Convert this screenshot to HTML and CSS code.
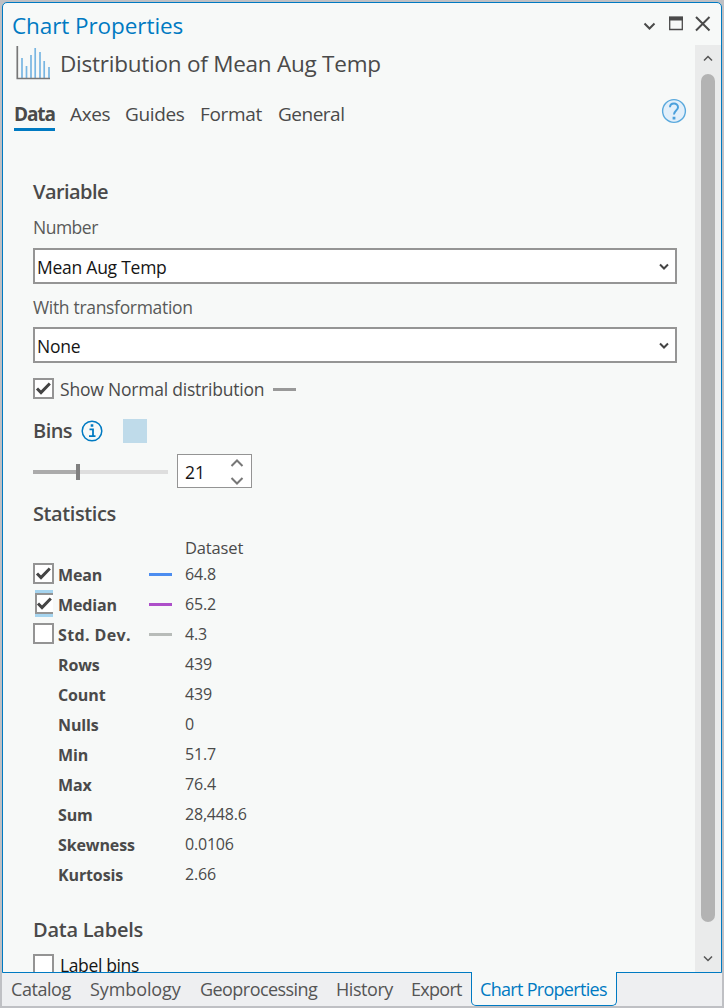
FILE: index.html
```
<!DOCTYPE html>
<html lang="en">
<head>
<meta charset="utf-8">
<title>Chart Properties</title>
<link rel="stylesheet" href="styles.css">
</head>
<body>
<svg class="defs" width="0" height="0"><defs>
<symbol id="check" viewBox="0 0 21 21"><path d="M4 10.500l4 4L16.800 5.500" fill="none" stroke="#444" stroke-width="3"/></symbol>
</defs></svg>
<main class="pane">
  <header class="titlebar">
    <h1 class="pane-title">Chart Properties</h1>
    <svg class="window-controls" width="70" height="20" viewBox="0 0 70 20" fill="none" stroke="#4a4a4a">
      <path d="M2.500 10.500l5 5 5-5" stroke-width="2"/>
      <path d="M27.700 4.500h12.600v12H27.700z" stroke-width="1.300"/><path d="M27 5.500h14" stroke-width="4"/>
      <path d="M54 4l13.500 13.500M67.500 4L54 17.500" stroke-width="2"/>
    </svg>
  </header>
  <div class="body">
    <div class="content">
      <div class="chart-head">
        <svg width="34" height="34" viewBox="0 0 34 34" fill="none">
          <path d="M6 12v20M10.500 20v12M15 9v23M19.200 2v30M24 6v26M28.200 15v17M33 21v11" stroke="#78b6e2" stroke-width="1.700"/>
          <path d="M1.300 0v32.500h33" stroke="#777" stroke-width="1.700"/>
        </svg>
        <h2 class="chart-title">Distribution of Mean Aug Temp</h2>
      </div>
      <div class="nav-row">
        <nav class="tabs"><a class="tab tab-on">Data</a><a class="tab t-axes">Axes</a><a class="tab t-guides">Guides</a><a class="tab t-format">Format</a><a class="tab t-general">General</a></nav>
        <svg class="help" width="26" height="26" viewBox="0 0 26 26" fill="none"><circle cx="13" cy="13" r="11.400" fill="#e2effa" stroke="#5aa9dd" stroke-width="1.400"/><path d="M9 9.300C9 4.300 17 4.300 17 9.200c0 3.300-4 3.300-4 7.300" stroke="#4ba0dc" stroke-width="2"/><path d="M11.600 18.800h2.800v2.700h-2.800z" fill="#4ba0dc"/></svg>
      </div>
      <form class="form">
        <h3 class="section s-variable">Variable</h3>
        <label class="label l-number">Number</label>
        <div class="select"><span class="v-mean">Mean Aug Temp</span><svg width="10" height="8" viewBox="0 0 10 8"><path d="M1 1.500l4 4 4-4" fill="none" stroke="#444" stroke-width="2"/></svg></div>
        <label class="label l-trans">With transformation</label>
        <div class="select"><span>None</span><svg width="10" height="8" viewBox="0 0 10 8"><path d="M1 1.500l4 4 4-4" fill="none" stroke="#444" stroke-width="2"/></svg></div>
        <div class="normal-row"><span class="box"><svg width="21" height="21"><use href="#check"/></svg></span><span class="normal-label">Show Normal distribution</span><i class="line gray"></i></div>
        <div class="bins-row"><h3 class="section">Bins</h3>
          <svg width="22" height="22" viewBox="0 0 22 22" fill="none" stroke="#007ac2"><circle cx="11" cy="11" r="9.800" stroke-width="1.500"/><path d="M8.500 9.300H12v6.400M8 16.200h6.500" stroke-width="1.800"/><path d="M9.700 5.500h2.600" stroke-width="2.500"/></svg>
          <i class="swatch"></i></div>
        <div class="slider-row">
          <div class="slider"><i class="done"></i><i class="thumb"></i><i class="rest"></i></div>
          <div class="spinner"><span>21</span><svg width="14" height="28" viewBox="0 0 14 28" fill="none" stroke="#777" stroke-width="2"><path d="M1.500 8L7 2.500 12.500 8M1.500 20L7 25.500 12.500 20"/></svg></div>
        </div>
        <h3 class="section s-stats">Statistics</h3>
        <div class="dataset">Dataset</div>
        <div class="stats">
          <div class="stat"><span class="box"><svg width="21" height="21"><use href="#check"/></svg></span><b>Mean</b><i class="line blue"></i><span class="num">64.8</span></div>
          <div class="stat"><span class="box focused"><svg width="21" height="21"><use href="#check"/></svg></span><b>Median</b><i class="line purple"></i><span class="num">65.2</span></div>
          <div class="stat"><span class="box"></span><b class="b-std">Std. Dev.</b><i class="line light"></i><span class="num">4.3</span></div>
          <div class="stat"><b>Rows</b><span class="num">439</span></div>
          <div class="stat"><b>Count</b><span class="num">439</span></div>
          <div class="stat"><b>Nulls</b><span class="num">0</span></div>
          <div class="stat"><b>Min</b><span class="num">51.7</span></div>
          <div class="stat"><b>Max</b><span class="num">76.4</span></div>
          <div class="stat"><b>Sum</b><span class="num">28,448.6</span></div>
          <div class="stat"><b>Skewness</b><span class="num">0.0106</span></div>
          <div class="stat"><b>Kurtosis</b><span class="num">2.66</span></div>
        </div>
        <h3 class="section s-labels">Data Labels</h3>
        <div class="bins-label"><span class="box"></span><span>Label bins</span></div>
      </form>
    </div>
    <div class="scrollbar">
      <svg width="10" height="8" viewBox="0 0 10 8"><path d="M1 6.500l4-4 4 4" fill="none" stroke="#555" stroke-width="1.500"/></svg>
      <i class="scroll-thumb"></i>
      <svg width="10" height="8" viewBox="0 0 10 8"><path d="M1 1.500l4 4 4-4" fill="none" stroke="#555" stroke-width="1.500"/></svg>
    </div>
  </div>
</main>
<footer class="dock"><a class="d-cat">Catalog</a><a class="d-sym">Symbology</a><a class="d-geo">Geoprocessing</a><a class="d-his">History</a><a class="d-exp">Export</a><a class="dock-on">Chart Properties</a></footer>
</body>
</html>
```
FILE: styles.css
```
* { box-sizing: border-box; }
body { margin: 0; width: 724px; height: 1008px; padding: 2px; background: #bfc0c4; font: 17px "Open Sans", "Noto Sans", sans-serif; color: #4a4a4a; overflow: hidden; display: flex; flex-direction: column; }
h1, h2, h3 { margin: 0; font-weight: 400; white-space: nowrap; }
a, b, span, label { white-space: nowrap; }
svg { display: block; flex: none; }
.defs { position: absolute; }
.pane { height: 971px; border: 1px solid #007ac2; border-radius: 5px 5px 0 0; background: #f7f9f8; display: flex; flex-direction: column; overflow: hidden; flex: none; }
.titlebar { height: 42px; flex: none; display: flex; justify-content: space-between; padding: 10px 9px 0 9px; }
.pane-title { color: #007ac2; font-size: 22.500px; line-height: 26px; letter-spacing: -0.080px; }
.body { flex: 1; min-height: 0; display: flex; }
.content { width: 692px; overflow: hidden; flex: none; }
.chart-head { display: flex; height: 36px; padding: 1px 0 0 13px; gap: 10px; }
.chart-title { font-size: 22.500px; line-height: 36px; letter-spacing: -0.240px; }
.nav-row { display: flex; justify-content: space-between; height: 56px; padding: 17px 8px 0 11px; }
.tabs { display: flex; font-size: 19px; }
.tab { line-height: 32px; height: 33px; letter-spacing: -0.350px; }
.tab-on { font-weight: 700; border-bottom: 3px solid #007ac2; letter-spacing: -1.100px; width: 41px; margin-right: 15px; }
.t-axes { width: 55px; }
.t-guides { width: 75px; }
.t-format { width: 78px; }
.t-general { letter-spacing: -0.500px; }
.form { padding: 37px 0 0 30px; display: flex; flex-direction: column; }
.section { font-size: 20px; font-weight: 600; line-height: 36px; letter-spacing: -0.550px; }
.s-stats { letter-spacing: -0.400px; }
.label { height: 38px; line-height: 35px; font-size: 17.500px; color: #595959; }
.l-number { letter-spacing: -0.500px; }
.l-trans { height: 43px; line-height: 46px; letter-spacing: -0.320px; }
.select { width: 644px; height: 36px; border: 2px solid #959595; background: #fff; padding: 1px 6px 0 2px; color: #151515; display: flex; align-items: center; justify-content: space-between; font-size: 17.500px; letter-spacing: -0.250px; }
.normal-row { display: flex; height: 52px; align-items: center; }
.normal-row .box { margin-top: -1px; }
.normal-label { width: 219px; padding-left: 6px; font-size: 17.500px; letter-spacing: -0.210px; }
.box { width: 21px; height: 21px; flex: none; border: 2px solid #949494; background: #fff; }
.box svg { margin: -2px; }
.line { width: 23px; height: 3px; flex: none; }
.gray { background: #999; margin: 1px 0 0 1px; }
.normal-label + .gray { margin: 1px 0 0; }
.blue { background: #4c8df0; }
.purple { background: #ad4fc9; }
.light { background: #b8bcb9; }
.bins-row { height: 32px; display: flex; align-items: center; }
.bins-row svg { margin: -1px 20px 0 9px; }
.swatch { width: 24px; height: 24px; background: #bfdbea; margin-top: -1px; }
.slider-row { display: flex; height: 49px; align-items: center; gap: 9px; }
.slider { width: 135px; display: flex; align-items: center; }
.done { width: 43px; height: 4px; background: #ababab; }
.thumb { width: 4px; height: 16px; background: #808080; }
.rest { flex: 1; height: 4px; background: #dedede; }
.spinner { width: 75px; height: 34px; margin-top: -1px; border: 1.500px solid #949494; background: #fff; display: flex; align-items: center; justify-content: space-between; padding: 2px 7px 0; color: #151515; font-size: 17.500px; }
.dataset { padding-left: 152px; height: 25px; line-height: 28px; font-size: 16.500px; letter-spacing: -0.150px; margin-top: 2px; }
.stat { height: 30px; display: grid; grid-template-columns: 25px 91px 36px 1fr; align-items: center; font-size: 16px; }
.stat b { grid-column: 2; padding-top: 2px; letter-spacing: -0.120px; }
.stat .b-std { letter-spacing: 0.380px; }
.stat .box, .stat b, .stat .line, .stat .num { grid-row: 1; }
.stat .box { margin-top: -1px; }
.stat .line { grid-column: 3; }
.stat .num { grid-column: 4; letter-spacing: -0.200px; }
.focused { width: 18px; height: 27px; margin-left: 2px; border: solid #a5d4ef; border-width: 3px 0; overflow: hidden; box-shadow: inset 2px 0 #949494, inset 0 2px #949494, inset 0 -2px #949494; }
.focused svg { margin: 0 0 0 -1px; }
.s-labels { margin-top: 23px; letter-spacing: -0.250px; }
.bins-label { height: 34px; display: flex; align-items: center; gap: 6px; color: #151515; font-size: 17.500px; letter-spacing: -0.370px; }
.bins-label .box { margin-top: -2px; }
.scrollbar { flex: 1; background: #eaebeb; display: flex; flex-direction: column; align-items: center; padding: 9px 0 9px; }
.scroll-thumb { width: 14px; flex: 1; margin: 12px 0 33px; border-radius: 7px; background: #b3b3b3; }
.dock { height: 33px; flex: none; background: #eeeff1; display: flex; padding-left: 9px; font-size: 18px; line-height: 33px; color: #555; }
.d-cat { width: 79px; letter-spacing: -0.450px; }
.d-sym { width: 110px; letter-spacing: -0.100px; }
.d-geo { width: 136px; letter-spacing: -0.550px; }
.d-his { width: 75px; letter-spacing: -0.450px; }
.d-exp { width: 60px; letter-spacing: -0.700px; }
.dock-on { width: 146px; height: 34px; margin-top: -1px; padding-left: 8px; border: solid #007ac2; border-width: 0 1px 1px; border-radius: 0 0 5px 5px; background: #f7f9f8; color: #007ac2; line-height: 35px; letter-spacing: -0.700px; }
```
